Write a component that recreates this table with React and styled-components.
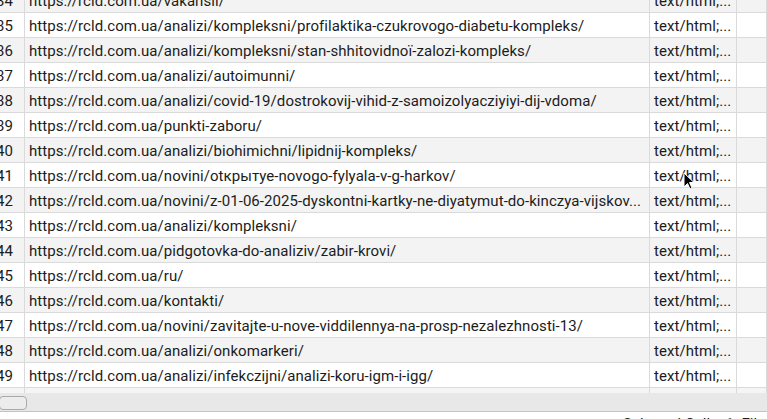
import React from 'react';
import styled, { createGlobalStyle } from 'styled-components';

const rows = [
  [34, 'https://rcld.com.ua/vakansii/'],
  [35, 'https://rcld.com.ua/analizi/kompleksni/profilaktika-czukrovogo-diabetu-kompleks/'],
  [36, 'https://rcld.com.ua/analizi/kompleksni/stan-shhitovidnoї-zalozi-kompleks/'],
  [37, 'https://rcld.com.ua/analizi/autoimunni/'],
  [38, 'https://rcld.com.ua/analizi/covid-19/dostrokovij-vihid-z-samoizolyacziyiyi-dij-vdoma/'],
  [39, 'https://rcld.com.ua/punkti-zaboru/'],
  [40, 'https://rcld.com.ua/analizi/biohimichni/lipidnij-kompleks/'],
  [41, 'https://rcld.com.ua/novini/otкрытye-novogo-fylyala-v-g-harkov/'],
  [42, 'https://rcld.com.ua/novini/z-01-06-2025-dyskontni-kartky-ne-diyatymut-do-kinczya-vijskov...'],
  [43, 'https://rcld.com.ua/analizi/kompleksni/'],
  [44, 'https://rcld.com.ua/pidgotovka-do-analiziv/zabir-krovi/'],
  [45, 'https://rcld.com.ua/ru/'],
  [46, 'https://rcld.com.ua/kontakti/'],
  [47, 'https://rcld.com.ua/novini/zavitajte-u-nove-viddilennya-na-prosp-nezalezhnosti-13/'],
  [48, 'https://rcld.com.ua/analizi/onkomarkeri/'],
  [49, 'https://rcld.com.ua/analizi/infekczijni/analizi-koru-igm-i-igg/'],
];

const GlobalStyle = createGlobalStyle`
  html, body {
    margin: 0;
    padding: 0;
    overflow: hidden;
    background: #ffffff;
  }
`;

const Page = styled.div`
  width: 767px;
  height: 419px;
  display: flex;
  flex-direction: column;
  overflow: hidden;
  position: relative;
  font-family: Roboto, 'Liberation Sans', sans-serif;
  font-size: 15px;
  letter-spacing: 0.06px;
  color: #1c1c1c;
`;

const Grid = styled.div`
  height: 393px;
  flex-shrink: 0;
  overflow: hidden;
  display: flex;
  flex-direction: column;
  background: #f5f5f5;
`;

const Body = styled.div`
  margin-top: -12px;
  display: flex;
  flex-direction: column;
  flex-shrink: 0;
`;

const Row = styled.div`
  display: grid;
  grid-template-columns: 25px 625px 87px 1fr;
  height: 25px;
  flex-shrink: 0;
  border-bottom: 1px solid #dadada;
  box-sizing: border-box;
  background: ${(p) => (p.$even ? '#f3f3f3' : '#ffffff')};
`;

const Filler = styled.div`
  flex: 1;
  display: grid;
  grid-template-columns: 25px 625px 87px 1fr;
`;

const Cell = styled.div`
  border-right: 1px solid #dadada;
  box-sizing: border-box;
  padding: 1px 4px 0;
  line-height: 24px;
  white-space: nowrap;
  overflow: hidden;
`;

const NumCell = styled(Cell)`
  text-align: right;
  padding: 1px 11px 0 0;
  direction: rtl;
`;

const Scrollbar = styled.div`
  height: 19px;
  flex-shrink: 0;
  background: #e8e8e8;
  border-bottom: 1px solid #c4c4c4;
  box-sizing: border-box;
  display: flex;
  align-items: center;
`;

const Thumb = styled.div`
  width: 28px;
  height: 14px;
  margin-left: -1px;
  margin-top: 2px;
  border: 1px solid #a9a9a9;
  border-radius: 4px;
  background: #ececec;
  box-sizing: border-box;
`;

const StatusBar = styled.div`
  flex: 1;
  min-height: 0;
  background: #ffffff;
  padding: 2px 0 0 623px;
  white-space: nowrap;
  line-height: 20px;
`;

const Cursor = styled.svg`
  position: absolute;
  left: 683px;
  top: 172px;
`;

export default function App() {
  return (
    <>
      <GlobalStyle />
      <Page>
        <Grid>
          <Body>
            {rows.map(([n, url]) => (
              <Row key={n} $even={n % 2 === 0}>
                <NumCell>{n}</NumCell>
                <Cell>{url}</Cell>
                <Cell>text/html;...</Cell>
                <Cell />
              </Row>
            ))}
          </Body>
          <Filler>
            <Cell />
            <Cell />
            <Cell />
            <Cell />
          </Filler>
        </Grid>
        <Scrollbar>
          <Thumb />
        </Scrollbar>
        <StatusBar>Selected Cells: 1&nbsp;&nbsp;Filter Total: 49</StatusBar>
        <Cursor width="13" height="20" viewBox="0 0 13 20">
          <path
            d="M1 1 L1 15 L4.5 11.5 L7 17 L9 16 L6.5 10.5 L11 10.5 Z"
            fill="#000"
            stroke="#fff"
            strokeWidth="1"
          />
        </Cursor>
      </Page>
    </>
  );
}
